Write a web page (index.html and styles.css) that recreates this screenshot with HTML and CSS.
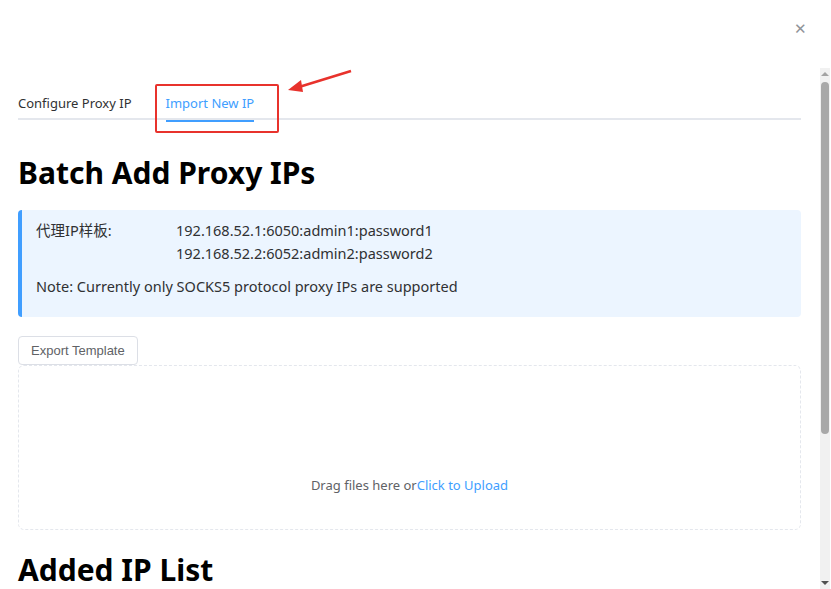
FILE: index.html
```html
<html>
<head>
	<title>Proxy IP</title>
	<meta charset="UTF-8">
	<link rel="stylesheet" href="styles.css">
</head>
<body>
	<div class="dialog">
		<div class="dialog-head">
			<span class="close">&#x2715;</span>
		</div>
		<div class="dialog-body">
			<div class="content">
				<div class="tabs">
					<div class="tab">Configure Proxy IP</div>
					<div class="tab active">Import New IP</div>
					<div class="mark-box"></div>
					<svg class="mark-arrow" width="80" height="30" viewBox="0 0 80 30">
						<path d="M66 3 L14 19" stroke="#e8322c" stroke-width="2.5" fill="none"/>
						<path d="M3 22 L16 12 L18 24 Z" fill="#e8322c"/>
					</svg>
				</div>

				<h1>Batch Add Proxy IPs</h1>

				<div class="alert">
					<div class="sample">
						<span class="label">代理IP样板:</span>
						<span class="values">192.168.52.1:6050:admin1:password1<br/>192.168.52.2:6052:admin2:password2</span>
					</div>
					<p class="note">Note: Currently only SOCKS5 protocol proxy IPs are supported</p>
				</div>

				<button class="btn">Export Template</button>
				<div class="upload">
					<span>Drag files here or</span><a>Click to Upload</a>
				</div>

				<h1>Added IP List</h1>
			</div>
			<div class="scrollbar">
				<div class="arrow up"></div>
				<div class="track"><div class="thumb"></div></div>
				<div class="arrow down"></div>
			</div>
		</div>
	</div>
</body>
</html>
```

FILE: styles.css
```css
*{
	margin: 0;
	padding: 0;
	box-sizing: border-box;
}
body{
	background: #fff;
	font-family: "Noto Sans", "Noto Sans CJK SC", sans-serif;
	color: #303133;
	overflow: hidden;
}
.dialog{
	width: 831px;
	height: 589px;
	display: flex;
	flex-direction: column;
}
.dialog-head{
	height: 68px;
	display: flex;
	justify-content: flex-end;
	padding: 16px 24px 0 0;
}
.close{
	font-size: 15px;
	color: #909399;
	line-height: 24px;
}
.dialog-body{
	flex: 1;
	display: flex;
	min-height: 0;
}
.content{
	flex: 1;
	padding: 12px 19px 0 18px;
	overflow: hidden;
}
.tabs{
	position: relative;
	display: flex;
	border-bottom: 2px solid #e4e7ed;
	height: 40px;
}
.tab{
	height: 40px;
	line-height: 34px;
	padding: 6px 17px 0;
	font-size: 13px;
	color: #303133;
}
.tab:first-child{
	padding-left: 0;
}
.tab.active{
	color: #409eff;
	position: relative;
}
.tab.active:after{
	content: "";
	position: absolute;
	left: 17px;
	right: 17px;
	bottom: -2px;
	height: 2px;
	background: #409eff;
}
.mark-box{
	position: absolute;
	left: 137px;
	top: 4px;
	width: 124px;
	height: 49px;
	border: 2px solid #e8322c;
	border-radius: 2px;
}
.mark-arrow{
	position: absolute;
	left: 267px;
	top: -12px;
}
h1{
	font-size: 30px;
	font-weight: bold;
	color: #000;
	margin: 33px 0 17px;
	line-height: 40px;
}
.alert{
	background: #ecf5ff;
	border-left: 4px solid #409eff;
	border-radius: 4px;
	padding: 9px 14px 19px 14px;
	font-size: 14.5px;
	line-height: 23px;
	color: #303133;
}
.sample{
	display: flex;
}
.label{
	width: 140px;
}
.note{
	margin-top: 10px;
}
.btn{
	margin-top: 19px;
	height: 29px;
	padding: 0 12px;
	font-family: "Liberation Sans", sans-serif;
	font-size: 13px;
	color: #606266;
	background: #fff;
	border: 1px solid #dcdfe6;
	border-radius: 4px;
}
.upload{
	height: 165px;
	border: 1px dashed #e4e7ed;
	border-radius: 6px;
	display: flex;
	justify-content: center;
	align-items: flex-end;
	padding-bottom: 35px;
	font-size: 13px;
	color: #606266;
}
.upload a{
	color: #409eff;
}
.upload + h1{
	margin-top: 20px;
}
.scrollbar{
	width: 10px;
	margin-right: 1px;
	background: #f1f1f1;
	display: flex;
	flex-direction: column;
	align-items: center;
}
.arrow{
	height: 12px;
	width: 10px;
	position: relative;
}
.arrow:after{
	content: "";
	position: absolute;
	left: 1px;
	border-left: 4px solid transparent;
	border-right: 4px solid transparent;
}
.arrow.up:after{
	top: 4px;
	border-bottom: 4px solid #a3a3a3;
}
.arrow.down:after{
	top: 4px;
	border-top: 4px solid #505050;
}
.track{
	flex: 1;
	width: 10px;
	padding: 2px 1px 0;
}
.thumb{
	height: 352px;
	background: #a8a8a8;
	border-radius: 4px;
}
```
